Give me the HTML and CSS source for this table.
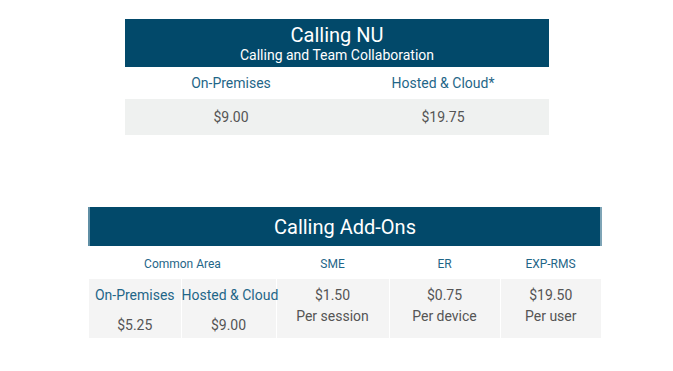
FILE: index.html
```html
<!DOCTYPE html>
<html>

<head>
	<meta charset="UTF-8">
	<title>Calling Pricing</title>
	<link rel="stylesheet" href="styles.css">
</head>

<body>
	<div class="page">

		<table class="price nu">
			<tr>
				<th colspan="2" class="head">
					<div class="title">Calling NU</div>
					<div class="subtitle">Calling and Team Collaboration</div>
				</th>
			</tr>
			<tr class="labels">
				<td>On-Premises</td>
				<td>Hosted &amp; Cloud*</td>
			</tr>
			<tr class="values">
				<td>$9.00</td>
				<td>$19.75</td>
			</tr>
		</table>

		<table class="price addons">
			<colgroup>
				<col class="c1">
				<col class="c2">
				<col class="c3">
				<col class="c4">
				<col class="c5">
			</colgroup>
			<tr>
				<th colspan="5" class="head">
					<div class="title">Calling Add-Ons</div>
				</th>
			</tr>
			<tr class="labels small">
				<td colspan="2">Common Area</td>
				<td>SME</td>
				<td>ER</td>
				<td>EXP-RMS</td>
			</tr>
			<tr class="values">
				<td><span class="blue">On-Premises</span><span class="low">$5.25</span></td>
				<td><span class="blue">Hosted &amp; Cloud</span><span class="low">$9.00</span></td>
				<td>$1.50<br>Per session</td>
				<td>$0.75<br>Per device</td>
				<td>$19.50<br>Per user</td>
			</tr>
		</table>

	</div>
</body>

</html>
```

FILE: styles.css
```css
html,
body {
	margin: 0;
	padding: 0;
	background: #fff;
	font-family: "Roboto", "Liberation Sans", sans-serif;
}

.page {
	display: flex;
	flex-direction: column;
	align-items: flex-start;
	padding-top: 19px;
}

.price {
	border-collapse: collapse;
	text-align: center;
}

.price td,
.price th {
	padding: 0;
	box-sizing: border-box;
}

.head {
	background: #02496a;
	color: #fff;
	font-weight: 400;
}

.title {
	font-size: 20px;
	line-height: 24px;
}

.subtitle {
	font-size: 14px;
	line-height: 16px;
}

.labels td {
	color: #1f6688;
	font-size: 14px;
}

.values td {
	color: #555;
	font-size: 14px;
}

/* top table */
.nu {
	margin-left: 125px;
	width: 424px;
}

.nu .head {
	height: 48px;
	padding-top: 4px;
	vertical-align: top;
}

.nu .labels td {
	height: 32px;
	width: 50%;
}

.nu .values td {
	height: 36px;
	background: #eff1f0;
}

/* add-ons table */
.addons {
	margin-left: 88px;
	margin-top: 72px;
	width: 512px;
	table-layout: fixed;
}

.addons .head {
	height: 39px;
	border-left: 2px solid #5f8ea4;
	border-right: 2px solid #7ea4b6;
	padding-top: 1px;
}

.addons .labels td {
	height: 33px;
	font-size: 12px;
	padding-top: 2px;
}

.addons .values td {
	height: 59px;
	background: #f4f4f4;
	border-left: 1px solid #fff;
	line-height: 21px;
	vertical-align: top;
	padding-top: 6px;
}

.addons .values td:first-child {
	border-left: none;
}

.blue {
	display: block;
	color: #1f6688;
	white-space: nowrap;
}

.low {
	display: block;
	margin-top: 9px;
}

.c1 { width: 92px; }
.c2 { width: 95px; }
.c3 { width: 113px; }
.c4 { width: 111px; }
.c5 { width: 101px; }
```
